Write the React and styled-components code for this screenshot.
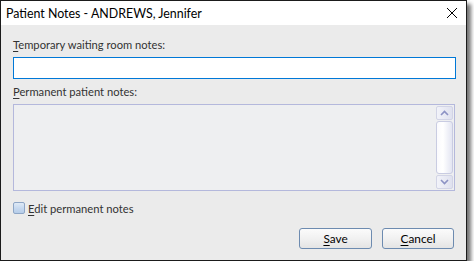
import React from "react";
import styled, { createGlobalStyle } from "styled-components";

const Global = createGlobalStyle`
  html, body { margin: 0; padding: 0; background: #fff; }
  *, *::before, *::after { box-sizing: border-box; }
  body { font-family: Lato, "Noto Sans", sans-serif; }
`;

const Window = styled.div`
  width: 467px;
  height: 261px;
  border: 1px solid #1b1b1b;
  background: #ebebeb;
  box-shadow: 4px 4px 4px rgba(0, 0, 0, 0.55);
  display: flex;
  flex-direction: column;
`;

const TitleBar = styled.div`
  height: 24px;
  background: #fff;
  display: flex;
  align-items: center;
  justify-content: space-between;
  padding: 0 9px 0 5px;
  font-size: 12.4px;
  color: #000;
`;

const Body = styled.div`
  flex: 1;
  display: flex;
  flex-direction: column;
  padding: 12px 10px 0 12px;
`;

const Label = styled.div`
  font-size: 11.2px;
  color: #333;
  line-height: 15px;
  height: 15px;
  margin-top: ${(p) => p.$top || 0}px;
`;

const Key = styled.span`
  text-decoration: underline;
  text-underline-offset: 2px;
`;

const TextInput = styled.div`
  margin-top: 5px;
  height: 22px;
  border: 1px solid #0078d7;
  background: #fff;
`;

const NotesBox = styled.div`
  margin-top: 5px;
  margin-right: 1px;
  height: 87px;
  border: 1px solid #b4b8dc;
  background: #eeeff1;
  display: flex;
  justify-content: flex-end;
  padding: 1px;
`;

const ScrollBar = styled.div`
  width: 17px;
  display: flex;
  flex-direction: column;
  gap: 1px;
`;

const ScrollBtn = styled.div`
  height: 14px;
  border: 1px solid #d2d4e6;
  border-radius: 2px;
  background: linear-gradient(90deg, #f2f3f9, #dfe1ef);
  display: flex;
  align-items: center;
  justify-content: center;
`;

const Thumb = styled.div`
  flex: 1;
  border: 1px solid #c9cce2;
  border-radius: 3px;
  background: linear-gradient(90deg, #fafafd, #ffffff 40%, #e3e5f2);
`;

const CheckRow = styled.div`
  margin-top: 11px;
  height: 12px;
  display: flex;
  align-items: center;
  gap: 3px;
  font-size: 11.2px;
  color: #333;
`;

const Check = styled.div`
  width: 12px;
  height: 12px;
  border: 1px solid #8ea6c6;
  border-radius: 2px;
  background: linear-gradient(180deg, #dfeaf6, #c7d9ef 50%, #b6cde9);
`;

const Buttons = styled.div`
  margin-top: auto;
  margin-bottom: 11px;
  margin-right: 2px;
  display: flex;
  justify-content: flex-end;
  gap: 10px;
`;

const Button = styled.div`
  width: ${(p) => p.$w}px;
  height: 21px;
  border: 1px solid #6d8bb0;
  border-radius: 3px;
  background: linear-gradient(180deg, #fbfbfb, #f1f1f1 50%, #e4e4e4);
  font-size: 11.8px;
  color: #000;
  display: flex;
  align-items: center;
  justify-content: center;
`;

const Chevron = ({ up }) => (
  <svg width="9" height="6" viewBox="0 0 9 6">
    <path
      d={up ? "M1 5 L4.5 1.5 L8 5" : "M1 1 L4.5 4.5 L8 1"}
      fill="none"
      stroke="#8c92c4"
      strokeWidth="1.6"
    />
  </svg>
);

export default function App() {
  return (
    <>
      <Global />
      <Window>
        <TitleBar>
          <span>Patient Notes - ANDREWS, Jennifer</span>
          <svg width="10" height="10" viewBox="0 0 10 10">
            <path d="M0 0 L10 10 M10 0 L0 10" stroke="#000" strokeWidth="1" />
          </svg>
        </TitleBar>
        <Body>
          <Label>
            <Key>T</Key>emporary waiting room notes:
          </Label>
          <TextInput />
          <Label $top={5}>
            <Key>P</Key>ermanent patient notes:
          </Label>
          <NotesBox>
            <ScrollBar>
              <ScrollBtn>
                <Chevron up />
              </ScrollBtn>
              <Thumb />
              <ScrollBtn>
                <Chevron />
              </ScrollBtn>
            </ScrollBar>
          </NotesBox>
          <CheckRow>
            <Check />
            <span>
              <Key>E</Key>dit permanent notes
            </span>
          </CheckRow>
          <Buttons>
            <Button $w={73}>
              <span>
                <Key>S</Key>ave
              </span>
            </Button>
            <Button $w={72}>
              <span>
                <Key>C</Key>ancel
              </span>
            </Button>
          </Buttons>
        </Body>
      </Window>
    </>
  );
}
